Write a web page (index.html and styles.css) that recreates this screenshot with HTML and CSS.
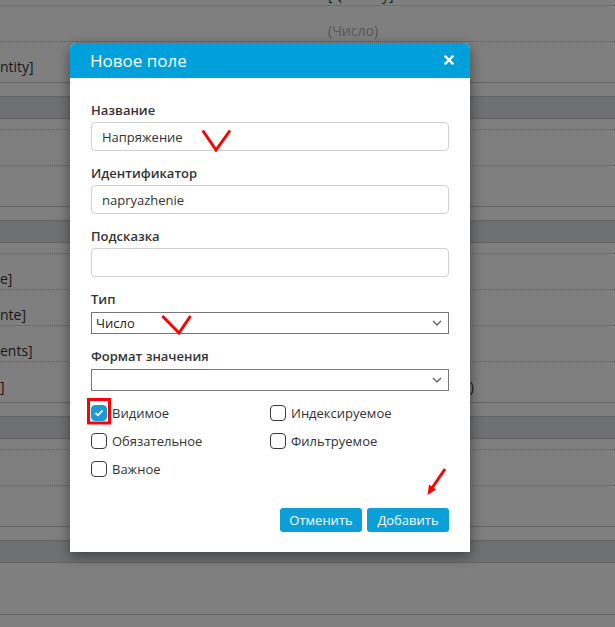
FILE: index.html
```html
<!DOCTYPE html>
<html lang="ru">
<head>
<meta charset="utf-8">
<title>Новое поле</title>
<link rel="stylesheet" href="styles.css">
</head>
<body>
<div class="table">
  <div class="row"><div class="c1"></div><div class="c2 dark">[Quantity]</div></div>
  <div class="row"><div class="c1"></div><div class="c2 muted">(Число)</div></div>
  <div class="row last"><div class="c1">ntity]</div><div class="c2"></div></div>
  <div class="gap"></div>
  <div class="head"></div>
  <div class="thin"></div>
  <div class="row"><div class="c1"></div><div class="c2"></div></div>
  <div class="row last"><div class="c1"></div><div class="c2"></div></div>
  <div class="gap"></div>
  <div class="head"></div>
  <div class="thin"></div>
  <div class="row"><div class="c1">e]</div><div class="c2"></div></div>
  <div class="row"><div class="c1">nte]</div><div class="c2"></div></div>
  <div class="row"><div class="c1">ents]</div><div class="c2"></div></div>
  <div class="row last"><div class="c1 red">]</div><div class="c2 dark">(Ссылка на документ)</div></div>
  <div class="gap"></div>
  <div class="head"></div>
  <div class="thin"></div>
  <div class="row"><div class="c1"></div><div class="c2"></div></div>
  <div class="row last"><div class="c1"></div><div class="c2"></div></div>
  <div class="gap"></div>
  <div class="head"></div>
  <div class="row tall"><div class="c1"></div><div class="c2"></div></div>
</div>

<div class="overlay"></div>

<div class="modal">
  <div class="modal-header">
    <span class="modal-title">Новое поле</span>
    <svg class="close" width="10" height="10" viewBox="0 0 10 10"><path d="M1.5 1.5 L8.5 8.5 M8.5 1.5 L1.5 8.5" stroke="#fff" stroke-width="2.4" stroke-linecap="square"/></svg>
  </div>
  <div class="modal-body">
    <div class="group">
      <label class="lbl">Название</label>
      <input class="inp" type="text" value="Напряжение">
    </div>
    <div class="group">
      <label class="lbl">Идентификатор</label>
      <input class="inp" type="text" value="napryazhenie">
    </div>
    <div class="group">
      <label class="lbl">Подсказка</label>
      <input class="inp" type="text" value="">
    </div>
    <div class="group">
      <label class="lbl">Тип</label>
      <div class="sel">
        <span class="sel-text">Число</span>
        <svg class="chev" width="10" height="6" viewBox="0 0 10 6"><path d="M1 1 L5 5 L9 1" fill="none" stroke="#555" stroke-width="1.2"/></svg>
      </div>
    </div>
    <div class="group">
      <label class="lbl">Формат значения</label>
      <div class="sel">
        <span class="sel-text"></span>
        <svg class="chev" width="10" height="6" viewBox="0 0 10 6"><path d="M1 1 L5 5 L9 1" fill="none" stroke="#555" stroke-width="1.2"/></svg>
      </div>
    </div>
    <div class="checks">
      <label class="chk"><span class="box checked"><svg width="10" height="8" viewBox="0 0 10 8"><path d="M1.5 4 L4 6.3 L8.5 1.5" fill="none" stroke="#fff" stroke-width="1.8"/></svg></span>Видимое</label>
      <label class="chk"><span class="box"></span>Индексируемое</label>
      <label class="chk"><span class="box"></span>Обязательное</label>
      <label class="chk"><span class="box"></span>Фильтруемое</label>
      <label class="chk"><span class="box"></span>Важное</label>
    </div>
    <div class="actions">
      <button class="btn">Отменить</button>
      <button class="btn">Добавить</button>
    </div>
  </div>
</div>

<svg class="marks" width="615" height="627" viewBox="0 0 615 627">
  <g fill="none" stroke="#ff0000" stroke-width="3" stroke-linejoin="miter">
    <path d="M202.7 130.5 L216 150 L230 130.5"/>
    <path d="M162.3 316 L179 333 L190.5 316"/>
    <rect x="88.5" y="399.5" width="21" height="23.5"/>
    <path d="M445 469 L432 488"/>
  </g>
  <path d="M427.5 495 L429 484.5 L436 489.5 Z" fill="#ff0000"/>
</svg>
</body>
</html>
```

FILE: styles.css
```css
* { box-sizing: border-box; }
html, body { margin: 0; padding: 0; }
body {
  width: 615px;
  height: 627px;
  overflow: hidden;
  background: #ffffff;
  font-family: "Open Sans", "Noto Sans", sans-serif;
  font-size: 14px;
  color: #333;
  position: relative;
}

/* background table */
.table { margin-top: -30px; }
.row {
  height: 36px;
  border-bottom: 1px dotted #bdbdbd;
  display: grid;
  grid-template-columns: 328px 1fr;
  padding-top: 15px;
  line-height: 20px;
  font-size: 14px;
}
.row.last { height: 41px; border-bottom: 1px solid #c8c8c8; }
.row.tall { height: 52px; border-bottom: 1px solid #c8c8c8; }
.gap { height: 14px; border-bottom: 1px solid #c8c8c8; }
.head { height: 22px; background: #dde1e6; border-bottom: 1px solid #c8c8c8; }
.thin { height: 11px; border-bottom: 1px dotted #bdbdbd; }
.c1 { color: #333; white-space: nowrap; }
.c2 { white-space: nowrap; }
.muted { color: #b0b0b0; }
.dark { color: #333; }
.red { color: #4a1818; }

.overlay {
  position: absolute;
  inset: 0;
  background: rgba(0, 0, 0, 0.5);
}

/* modal */
.modal {
  position: absolute;
  left: 70px;
  top: 43px;
  width: 400px;
  background: #fff;
  border-radius: 6px 6px 0 0;
  box-shadow: 0 4px 14px rgba(0, 0, 0, 0.45);
}
.modal-header {
  height: 35px;
  background: #00a0dc;
  border-radius: 6px 6px 0 0;
  display: flex;
  align-items: center;
  justify-content: space-between;
  padding: 0 16px 0 20px;
}
.modal-title {
  color: #fff;
  font-size: 17px;
  line-height: 24px;
}
.close { display: block; margin-top: -2px; }

.modal-body { padding: 22px 21px 20px; }
.group { margin-bottom: 12px; }
.lbl {
  display: block;
  font-weight: 600;
  font-size: 13px;
  line-height: 20px;
  margin-bottom: 2px;
  color: #333;
}
.inp {
  display: block;
  width: 100%;
  height: 29px;
  border: 1px solid #d0d0d0;
  border-radius: 4px;
  padding: 0 10px;
  font-family: inherit;
  font-size: 13px;
  color: #333;
  outline: none;
}
.sel {
  margin-top: 3px;
  height: 22px;
  border: 1px solid #767676;
  display: flex;
  align-items: center;
  justify-content: space-between;
  padding: 0 6px 0 4px;
  font-size: 13px;
  color: #222;
}
.chev { display: block; }

.checks {
  margin-top: 9px;
  display: grid;
  grid-template-columns: 179px 179px;
  row-gap: 8px;
}
.chk {
  display: flex;
  align-items: center;
  height: 20px;
  font-size: 13px;
  color: #333;
}
.box {
  width: 16px;
  height: 16px;
  border: 1.5px solid #3a3a3a;
  border-radius: 4px;
  margin-right: 5px;
  flex: none;
  display: flex;
  align-items: center;
  justify-content: center;
}
.box.checked { background: #1d9ad6; border-color: #1d9ad6; }

.actions {
  margin-top: 29px;
  display: flex;
  justify-content: flex-end;
  gap: 5px;
}
.btn {
  height: 24px;
  width: 82px;
  padding: 0;
  border: none;
  border-radius: 3px;
  background: #0a9fd9;
  color: #fff;
  font-family: inherit;
  font-size: 13px;
  line-height: 24px;
}

.marks {
  position: absolute;
  left: 0;
  top: 0;
  pointer-events: none;
}
```
